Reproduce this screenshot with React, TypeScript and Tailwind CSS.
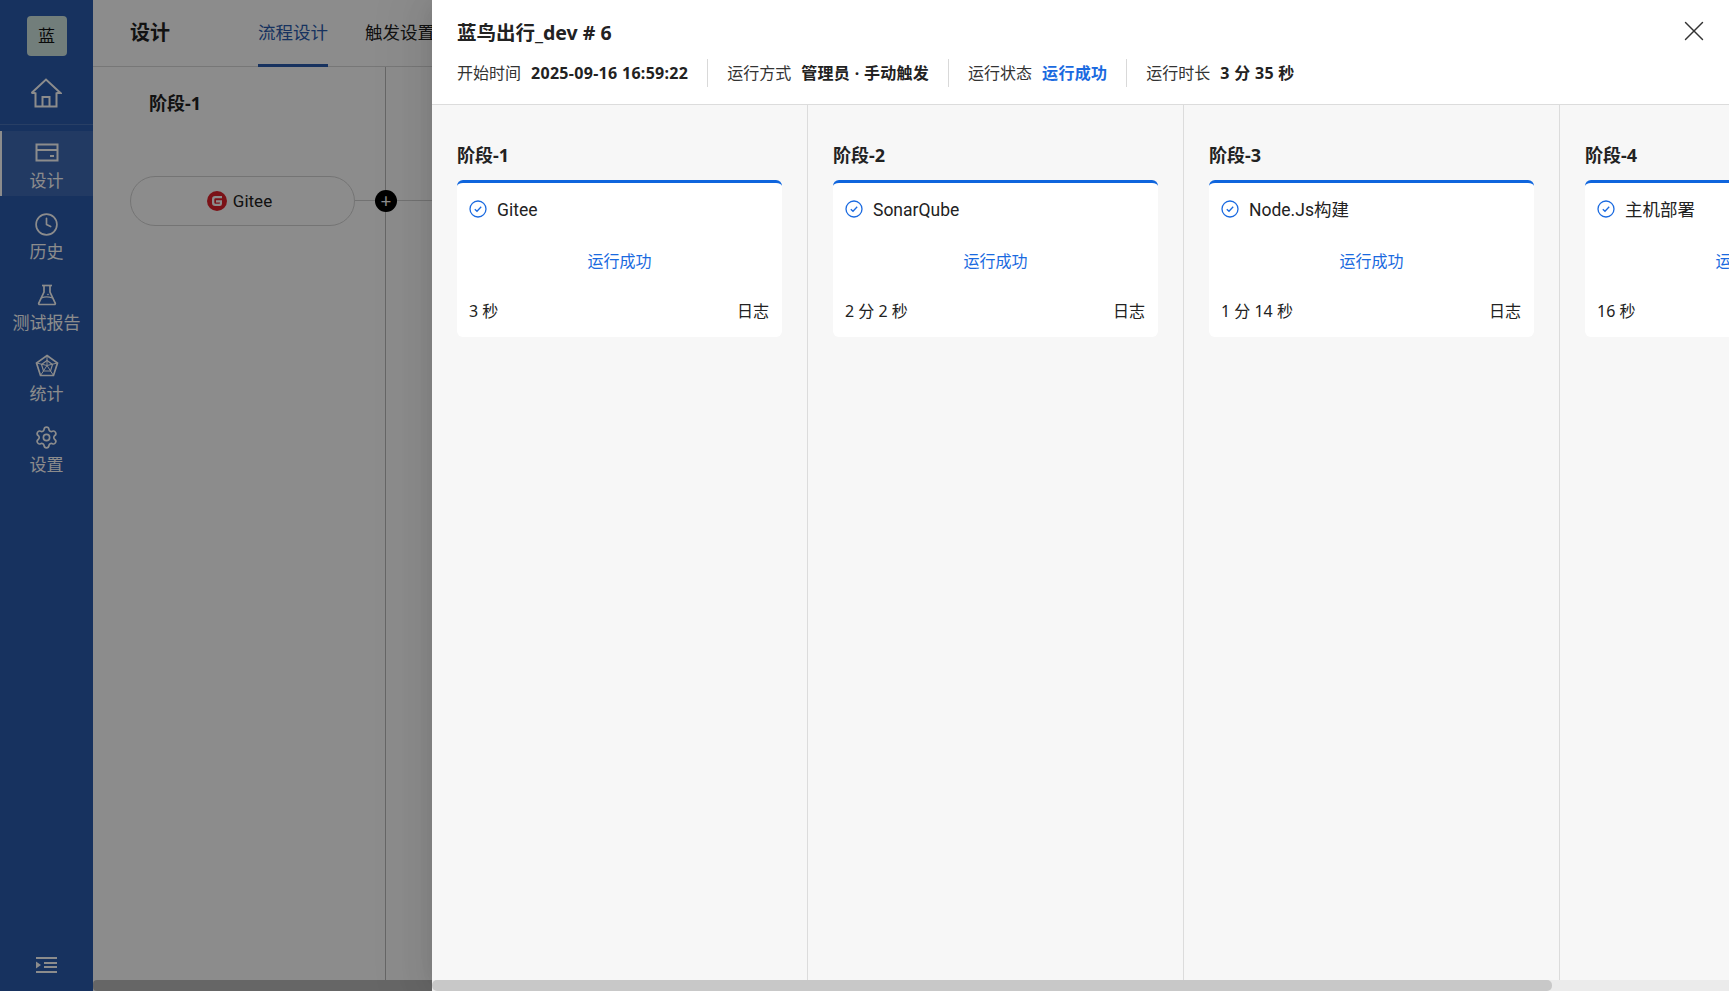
import React from 'react';
import { Clock, Settings, X } from 'lucide-react';

const HomeIcon = () => (
  <svg width="32" height="30" viewBox="0 0 32 30" fill="none" stroke="currentColor" strokeWidth="2">
    <path d="M1.5 15 16 1.5 30.5 15h-4" />
    <path d="M1.5 15h4M5.5 14.500V28.500h21V14.500" />
    <path d="M12.500 28.500V19h7v9.500" />
  </svg>
);

const DesignIcon = () => (
  <svg width="24" height="20" viewBox="0 0 24 20" fill="none" stroke="currentColor" strokeWidth="2">
    <rect x="1.500" y="1.500" width="21" height="16" />
    <path d="M1.500 7h21" />
    <path d="M15 13h4" />
  </svg>
);

const FlaskIcon = () => (
  <svg width="20" height="22" viewBox="0 0 20 22" fill="none" stroke="currentColor" strokeWidth="1.700">
    <path d="M5 1.500h10" />
    <path d="M7 1.500v6.500L1.800 19a1 1 0 0 0 .9 1.500h14.600a1 1 0 0 0 .9-1.500L13 8V1.500" />
    <path d="M4.500 14c3-1.500 7-1.500 11 0" strokeWidth="1.300" />
    <circle cx="11" cy="10.500" r=".6" fill="currentColor" strokeWidth=".6" />
  </svg>
);

const StatsIcon = () => (
  <svg width="24" height="24" viewBox="0 0 24 24" fill="none" stroke="currentColor" strokeWidth="1.700">
    <path d="M12 1.500 22.500 9 18.500 21.500h-13L1.500 9z" />
    <path d="M12 6.500 17.500 10.500 15.500 17h-7L6.500 10.500z" strokeWidth="1.200" />
    <path d="M12 1.500v10M22.500 9 12 11.500M18.500 21.500 12 11.500M5.500 21.500 12 11.500M1.500 9 12 11.500" strokeWidth="1" />
  </svg>
);

const CollapseIcon = () => (
  <svg width="21" height="18" viewBox="0 0 21 18" fill="currentColor">
    <rect x="0" y="1" width="21" height="2" />
    <rect x="8" y="6" width="13" height="2" />
    <rect x="8" y="10" width="13" height="2" />
    <rect x="0" y="15" width="21" height="2" />
    <path d="M0 5.500 5 9 0 12.500z" />
  </svg>
);

const GiteeLogo = () => (
  <svg width="20" height="20" viewBox="0 0 20 20">
    <circle cx="10" cy="10" r="10" fill="#e0222a" />
    <path d="M5 8.200A3.200 3.200 0 0 1 8.200 5H15v2.200H8.500a1.200 1.200 0 0 0-1.200 1.200v3.200a1.200 1.200 0 0 0 1.200 1.200h3.700a.8.800 0 0 0 .8-.8v-.6H9V9.200h6v3.600A2.200 2.200 0 0 1 12.800 15H8.200A3.200 3.200 0 0 1 5 11.800z" fill="#fff" />
  </svg>
);

const CheckIcon = () => (
  <svg className="mb-[2px]" width="18" height="18" viewBox="0 0 18 18" fill="none" stroke="#1a6ae0" strokeWidth="1.300">
    <circle cx="9" cy="9" r="8" />
    <path d="M5.800 9.200 8 11.300l4.200-4.500" />
  </svg>
);

const navItems = [
  { label: '设计', icon: <DesignIcon />, active: true },
  { label: '历史', icon: <Clock className="w-[25px] h-[25px]" strokeWidth={1.600} /> },
  { label: '测试报告', icon: <FlaskIcon /> },
  { label: '统计', icon: <StatsIcon /> },
  { label: '设置', icon: <Settings className="w-[25px] h-[25px]" strokeWidth={1.600} /> },
];

const stages = [
  { stage: '阶段-1', name: 'Gitee', time: '3 秒' },
  { stage: '阶段-2', name: 'SonarQube', time: '2 分 2 秒' },
  { stage: '阶段-3', name: 'Node.Js构建', time: '1 分 14 秒' },
  { stage: '阶段-4', name: '主机部署', time: '16 秒' },
];

const meta = [
  { label: '开始时间', value: '2025-09-16 16:59:22' },
  { label: '运行方式', value: '管理员 · 手动触发' },
  { label: '运行状态', value: '运行成功', blue: true },
  { label: '运行时长', value: '3 分 35 秒' },
];

const App: React.FC = () => {
  return (
    <div className="relative w-[1729px] h-[991px] overflow-hidden flex bg-white text-[#222] text-base font-['Noto_Sans','Noto_Sans_CJK_SC',sans-serif]">
      {/* page behind the drawer */}
      <aside className="w-[93px] shrink-0 flex flex-col items-stretch bg-[#2a5bad] text-white">
        <div className="h-[72px] pt-4 flex justify-center">
          <div className="w-10 h-10 rounded-[4px] bg-[#cfe6e0] text-[#111] flex items-center justify-center text-[17px]">蓝</div>
        </div>
        <div className="h-[53px] flex justify-center pt-[6px] pr-[2px] border-b border-white/15">
          <HomeIcon />
        </div>
        <div className="mt-[6px] flex flex-col gap-[6px]">
          {navItems.map((item) => (
            <div
              key={item.label}
              className={`h-[65px] pt-[6px] flex flex-col items-center justify-center gap-[3px] ${item.active ? 'bg-white/10 border-l-2 border-white pr-[2px]' : ''}`}
            >
              <div className="h-[26px] flex items-center">{item.icon}</div>
              <span className="text-[17px] leading-6 whitespace-nowrap">{item.label}</span>
            </div>
          ))}
        </div>
        <div className="mt-auto mb-[8px] h-[36px] flex items-center justify-center">
          <CollapseIcon />
        </div>
      </aside>

      <main className="flex-1 min-w-0 flex flex-col">
        <header className="h-[67px] shrink-0 flex border-b border-[#d9d9d9] pl-[37px]">
          <div className="w-[128px] pt-[17px] text-[20px] leading-8 font-bold">设计</div>
          <div className="h-[67px] w-[70px] border-b-[3px] border-[#2a5bad] text-[#2a5bad] text-[17.500px] leading-8 pt-[16px] whitespace-nowrap">流程设计</div>
          <div className="ml-[37px] text-[17.500px] leading-8 pt-[16px] whitespace-nowrap">触发设置</div>
        </header>
        <div className="flex-1 min-h-0 flex">
          <div className="w-[293px] border-r border-[#bbb] pl-[37px] relative">
            <div className="pt-[22px] text-[18px] leading-7 font-bold pl-[19px]">阶段-1</div>
            <div className="mt-[59px] w-[225px] h-[50px] pr-[6px] rounded-full border border-[#d4d4d4] flex items-center justify-center gap-[6px] text-[17px] font-['Roboto','Noto_Sans_CJK_SC',sans-serif]">
              <GiteeLogo />
              <span className="pt-[2px]">Gitee</span>
            </div>
            <div className="absolute left-[262px] top-[133px] w-[80px] h-px bg-[#d0d0d0]" />
            <div className="absolute left-[282px] top-[123px] w-[22px] h-[22px] rounded-full bg-black text-white flex items-center justify-center text-[19px] leading-none">+</div>
          </div>
        </div>
        <div className="h-[11px] shrink-0 bg-[#bbb] rounded-l-[4px]" />
      </main>

      {/* mask */}
      <div className="absolute inset-0 bg-black/45" />

      {/* drawer */}
      <section className="absolute top-0 bottom-0 right-0 w-[1297px] flex flex-col bg-[#f7f7f7] shadow-[-6px_0_16px_-8px_rgba(0,0,0,0.08),-9px_0_28px_0_rgba(0,0,0,0.05),-12px_0_48px_16px_rgba(0,0,0,0.03)]">
        <div className="h-[105px] shrink-0 bg-white border-b border-[#dcdcdc] pl-[25px] pr-[25px] relative">
          <div className="pt-[18px] text-[19.500px] leading-[30px] font-bold">蓝鸟出行_dev # 6</div>
          <div className="mt-[11px] flex items-center h-[28px]">
            {meta.map((m, i) => (
              <div
                key={m.label}
                className={`flex items-center h-[28px] ${i > 0 ? 'pl-[19px] ml-[19px] border-l border-[#d9d9d9]' : ''}`}
              >
                <span className="text-[#333]">{m.label}</span>
                <span className={`ml-[10px] font-bold tracking-[0.3px] whitespace-nowrap ${m.blue ? 'text-[#1a6ae0]' : ''}`}>{m.value}</span>
              </div>
            ))}
          </div>
          <X className="absolute right-[18px] top-[14px] w-[34px] h-[34px] text-[#333]" strokeWidth={1} />
        </div>

        <div className="flex-1 min-h-0 flex overflow-hidden">
          {stages.map((s) => (
            <div key={s.stage} className="w-[376px] shrink-0 border-r border-[#dcdcdc] pl-[25px] pr-[25px]">
              <div className="pt-[35px] text-[18px] leading-[30px] font-bold whitespace-nowrap">{s.stage}</div>
              <div className="mt-[10px] h-[157px] w-[325px] bg-white rounded-[6px] border-t-[3px] border-[#0f65dd] px-3 flex flex-col">
                <div className="mt-[15px] h-6 flex items-center gap-[10px]">
                  <CheckIcon />
                  <span className="leading-6 text-[17.500px] font-['Roboto','Noto_Sans_CJK_SC',sans-serif]">{s.name}</span>
                </div>
                <div className="mt-[27px] text-center text-[#1a6ae0] leading-6">运行成功</div>
                <div className="mt-[26px] pr-[1px] flex justify-between leading-6">
                  <span>{s.time}</span>
                  <span>日志</span>
                </div>
              </div>
            </div>
          ))}
        </div>

        <div className="h-[11px] shrink-0 bg-[#ebebeb]">
          <div className="h-full w-[1120px] bg-[#c8c8c8] rounded-[5px]" />
        </div>
      </section>
    </div>
  );
};

export default App;
